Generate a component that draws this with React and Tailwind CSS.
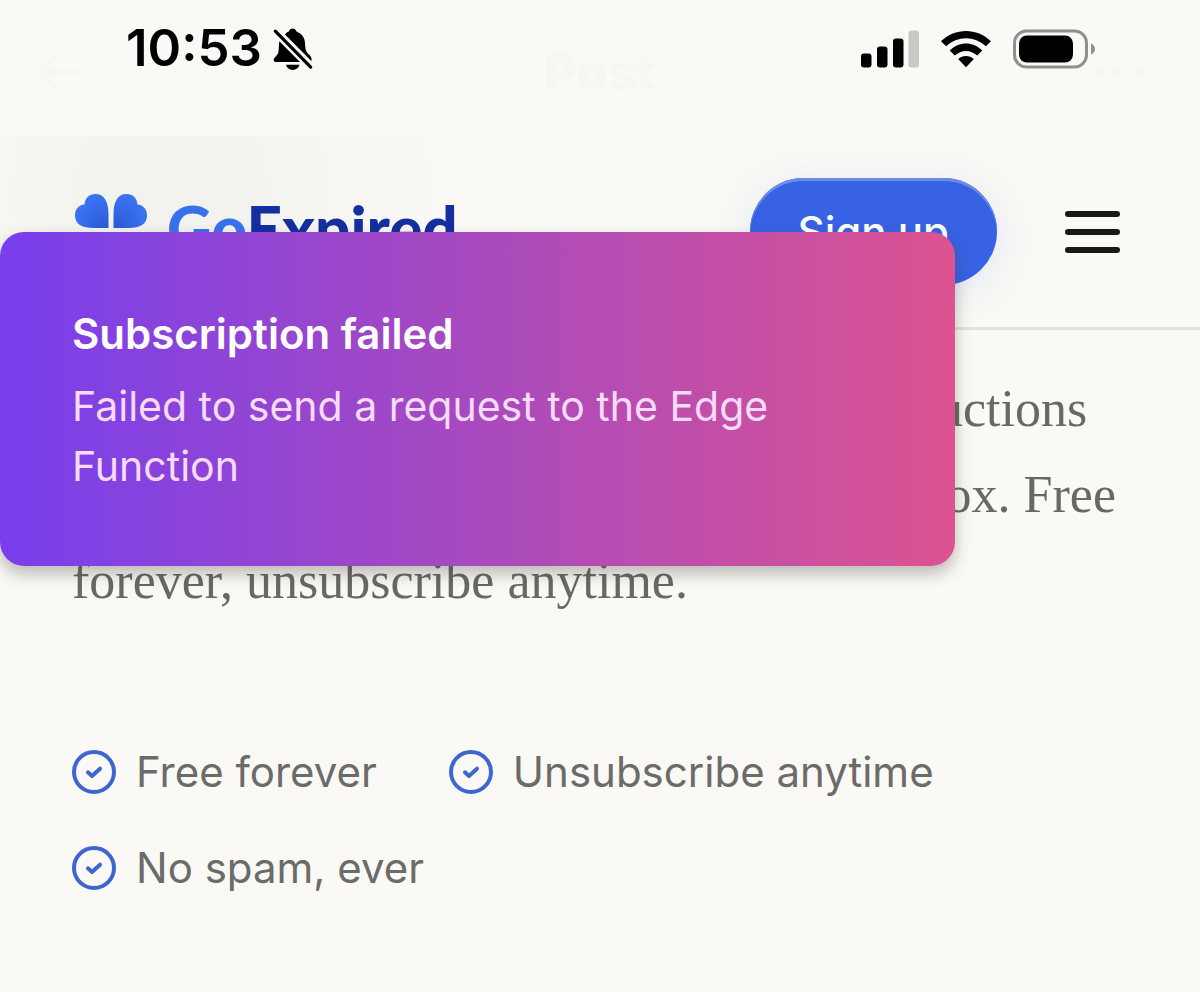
import { useState } from 'react';

const perks = ['Free forever', 'Unsubscribe anytime', 'No spam, ever'];

function BellOffIcon() {
  return (
    <svg className="h-11 w-10" viewBox="0 0 40 44" aria-hidden="true">
      <path d="M12 7.5C13 5.8 14.6 4.9 15.8 4.4C16.4 2.7 17.8 1.5 19.6 1.5S22.8 2.7 23.5 4.4C28.8 6.6 31.8 10.6 32 16C32.2 22.5 33 25 36 27.5C38.2 29.4 38.7 31 38.6 34.2Z" />
      <path d="M6.3 14.3L27 35H3C.8 35 .2 33.3.9 31.8C1.6 30.2 4.6 28.2 5.3 25.5C6 22.5 5.7 18 6.3 14.3Z" />
      <path d="M13 37.8H26.5C25.7 41 23 43 19.7 43S13.8 41 13 37.8Z" />
      <path d="M2.3 4.2L37.7 40" stroke="#000" strokeWidth="3.2" strokeLinecap="round" />
    </svg>
  );
}

function SignalIcon() {
  return (
    <svg className="h-[38px] w-[58px]" viewBox="0 0 58 38" aria-hidden="true">
      <rect x="0" y="23.5" width="10.5" height="14" rx="3" />
      <rect x="16" y="16.5" width="10.5" height="21" rx="3" />
      <rect x="32" y="8.5" width="10.5" height="29" rx="3" />
      <rect x="47.5" y="0.5" width="10.5" height="37" rx="3" fill="#c8c8c5" />
    </svg>
  );
}

function WifiIcon() {
  return (
    <svg className="h-[38px] w-[50px]" viewBox="0 0 50 37" aria-hidden="true">
      <path d="M0 10.8C14-3.1 36-3.1 50 10.8L44.9 15.8C33.5 4.9 16.5 4.9 5.1 15.8Z" />
      <path d="M8.7 20.1C18 10.6 32 10.6 41.3 20.1L36.2 25.1C29.7 18.8 20.3 18.8 13.8 25.1Z" />
      <path d="M17.2 28.6C21.4 24.6 28.6 24.6 32.8 28.6L25 36.8Z" />
    </svg>
  );
}

function BatteryIcon() {
  return (
    <svg className="h-10 w-[82px]" viewBox="0 0 82 40" aria-hidden="true">
      <rect x="1.5" y="2" width="72" height="36" rx="12" fill="none" stroke="#8f8f8d" strokeWidth="3" />
      <rect x="6" y="6.5" width="54" height="27" rx="8" />
      <path d="M78 14.5C80.5 15.6 82 17.6 82 20S80.5 24.4 78 25.5Z" fill="#8f8f8d" />
    </svg>
  );
}

function CloverLogo() {
  const leaf = 'M33.5 34H18C7 34 0 30 0 21.5C0 15 4 11 9.5 10.5C10 4 14.5 0 20.5 0C29 0 33.5 7.5 33.5 20Z';
  return (
    <svg className="h-[76px] w-[72px]" viewBox="0 0 72 76" aria-hidden="true">
      <defs>
        <radialGradient id="leaf" gradientUnits="userSpaceOnUse" cx="30" cy="32" r="28">
          <stop offset="0" stopColor="#2c5bd4" />
          <stop offset="1" stopColor="#3871f2" />
        </radialGradient>
      </defs>
      <path d={leaf} fill="url(#leaf)" />
      <path d={leaf} fill="url(#leaf)" transform="matrix(-1 0 0 1 72 0)" />
      <path d={leaf} fill="url(#leaf)" transform="matrix(1 0 0 -1 0 76)" />
      <path d={leaf} fill="url(#leaf)" transform="matrix(-1 0 0 -1 72 76)" />
    </svg>
  );
}

function CheckCircle() {
  return (
    <svg className="size-11 shrink-0" viewBox="0 0 44 44" fill="none" stroke="#3f66cf" strokeWidth="4" strokeLinecap="round" strokeLinejoin="round" aria-hidden="true">
      <circle cx="22" cy="22" r="20" />
      <path d="M16 22.3L20 26L28 18.7" />
    </svg>
  );
}

function StatusBar() {
  return (
    <div className="relative h-[136px]">
      {/* Faded app bar behind the status icons */}
      <div className="absolute inset-x-0 top-10 flex h-16 items-center justify-between pr-14 pl-9 text-[#f7f6f2]">
        <svg className="h-10 w-12" viewBox="0 0 48 40" fill="none" stroke="currentColor" strokeWidth="5" aria-hidden="true">
          <path d="M48 20H3M22 1L3 20L22 39" />
        </svg>
        <span className="absolute inset-x-0 text-center text-[50px] font-extrabold">Post</span>
        <svg className="h-3 w-[52px]" viewBox="0 0 52 12" fill="currentColor" aria-hidden="true">
          <circle cx="6" cy="6" r="5" />
          <circle cx="26" cy="6" r="5" />
          <circle cx="46" cy="6" r="5" />
        </svg>
      </div>

      <div className="relative flex h-[97px] items-center justify-between pr-[105px] pl-[126px]">
        <div className="flex items-center gap-[11px]">
          <span className="text-[51px] font-semibold text-black">10:53</span>
          <BellOffIcon />
        </div>
        <div className="flex items-center gap-[22px]">
          <SignalIcon />
          <WifiIcon />
          <BatteryIcon />
        </div>
      </div>
    </div>
  );
}

function Header() {
  return (
    <header className="flex h-[194px] items-center justify-between border-b-3 border-[#e4e3e0] bg-[radial-gradient(280px_320px_at_170px_60px,#f2f2ef_20%,#faf9f5_100%)] pr-20 pl-[75px]">
      <a href="#home" className="flex items-center gap-5">
        <CloverLogo />
        <span className="pb-2 font-[Lato] text-[62px] leading-none font-black text-[#142f9f]">
          <span className="text-[#3871ed]">Go</span>Expired
        </span>
      </a>
      <div className="flex items-center gap-[68px]">
        <button className="h-[107px] rounded-full bg-[#3862e4] px-12 text-[42px] font-medium text-white shadow-[inset_0_3px_0_#6c8be2,0_8px_40px_#3862e420]">
          Sign up
        </button>
        <button className="flex w-[55px] flex-col gap-3" aria-label="Menu">
          <span className="h-[6px] w-full rounded-full bg-[#1a1918]" />
          <span className="h-[6px] w-full rounded-full bg-[#1a1918]" />
          <span className="h-[6px] w-full rounded-full bg-[#1a1918]" />
        </button>
      </div>
    </header>
  );
}

function Toast({ title, message, onClose }) {
  return (
    <div
      role="alert"
      onClick={onClose}
      className="absolute top-[232px] left-0 w-[955px] max-w-full rounded-3xl bg-[linear-gradient(to_right,#783fec,#a84abe_50%,#dc5391)] px-[72px] pt-[72px] pb-[70px] leading-[60px] shadow-[0_8px_16px_#33332e50]"
    >
      <p className="text-[42px] font-semibold text-white">{title}</p>
      <p className="mt-3 text-[41px] text-[#f6dafa]">{message}</p>
    </div>
  );
}

export default function App() {
  const [showToast, setShowToast] = useState(true);

  return (
    <div className="relative min-h-screen overflow-hidden bg-[#faf9f5] font-[Inter,sans-serif]">
      <StatusBar />
      <Header />

      <main className="px-[72px] pt-9">
        <p className="font-['Liberation_Serif',serif] text-[52px] leading-[86px] text-[#686865]">
          Get the best expired domains with daily auctions delivered once a week
          straight to your inbox. Free forever, unsubscribe anytime.
        </p>

        <ul className="mt-[118px] flex flex-wrap gap-x-[72px] gap-y-9">
          {perks.map((perk) => (
            <li key={perk} className="flex items-center gap-5 text-[42px] leading-[60px] text-[#6b6b69]">
              <CheckCircle />
              {perk}
            </li>
          ))}
        </ul>
      </main>

      {showToast && (
        <Toast
          title="Subscription failed"
          message="Failed to send a request to the Edge Function"
          onClose={() => setShowToast(false)}
        />
      )}
    </div>
  );
}
